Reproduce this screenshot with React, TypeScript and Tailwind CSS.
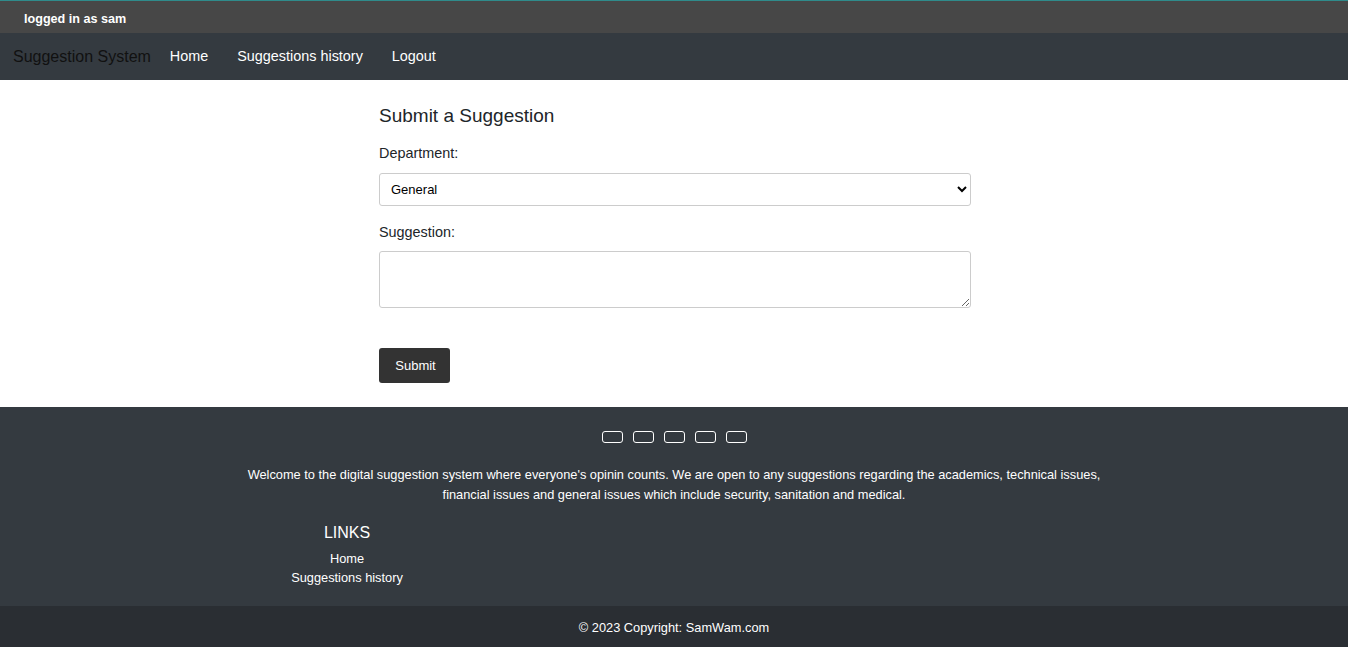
import React from 'react';

export default function App() {
  return (
    <div className="min-h-screen bg-white font-['Liberation_Sans',Arial,sans-serif]">
      {/* Top status bar */}
      <div className="h-[33px] bg-[#474747] border-t border-[#2f8b8b] flex items-center px-[24px] pt-[4px]">
        <span className="text-white font-bold text-[12.6px]">logged in as sam</span>
      </div>

      {/* Navbar */}
      <nav className="h-[47px] bg-[#343a40] flex items-center pl-[13px]">
        <span className="text-[16px] text-[#111] mr-[19px]">Suggestion System</span>
        <a className="text-white text-[14.4px] mr-[29px]" href="#">Home</a>
        <a className="text-white text-[14.4px] mr-[29px]" href="#">Suggestions history</a>
        <a className="text-white text-[14.4px]" href="#">Logout</a>
      </nav>

      {/* Form */}
      <main className="w-[592px] ml-[379px] pt-[24px] pb-[24px] text-[#212529]">
        <h3 className="text-[19px] leading-[23px] mb-[16px]">Submit a Suggestion</h3>
        <label className="block text-[14.4px] leading-[20px] mb-[10px]">Department:</label>
        <select className="w-full h-[33px] border border-[#ccc] rounded-[3px] pl-[7px] pr-[6px] text-[13px] text-black bg-white mb-[16px]">
          <option>General</option>
          <option>Academics</option>
          <option>Technical</option>
          <option>Financial</option>
        </select>
        <label className="block text-[14.4px] leading-[20px] mb-[9px]">Suggestion:</label>
        <textarea className="block w-full h-[57px] border border-[#ccc] rounded-[3px] p-2 text-[13px] mb-[40px]" />
        <button className="w-[71px] h-[35px] bg-[#333] text-white text-[13px] rounded-[3px] pl-[2px]">Submit</button>
      </main>

      {/* Footer */}
      <footer className="bg-[#343a40] text-white">
        <div className="pt-[24px] pb-[19px]">
          <div className="flex justify-center gap-[10px] mb-[22px]">
            {[0, 1, 2, 3, 4].map((i) => (
              <span key={i} className="w-[21px] h-[12px] border border-white rounded-[3px]" />
            ))}
          </div>
          <p className="text-center text-[12.8px] leading-[20px] mb-[18px]">
            Welcome to the digital suggestion system where everyone's opinin counts. We are open to any suggestions regarding the academics, technical issues,
            <br />
            financial issues and general issues which include security, sanitation and medical.
          </p>
          <div className="ml-[247px] w-[200px] text-center">
            <h5 className="text-[16px] leading-[20px] mb-[6px]">LINKS</h5>
            <ul className="text-[12.8px] leading-[19px]">
              <li><a href="#">Home</a></li>
              <li><a href="#">Suggestions history</a></li>
            </ul>
          </div>
        </div>
        <div className="bg-[#2a2e33] h-[41px] flex items-center justify-center text-[12.8px] pt-[2px]">
          © 2023 Copyright: SamWam.com
        </div>
      </footer>
    </div>
  );
}
